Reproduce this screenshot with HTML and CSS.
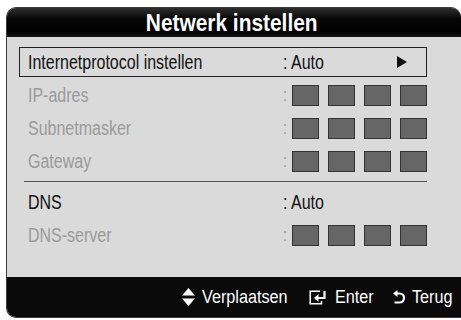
FILE: index.html
```html
<!DOCTYPE html>
<html>
<head>
<meta charset="utf-8">
<link rel="stylesheet" href="styles.css">
</head>
<body>
<div class="panel">
  <div class="header"><span class="title">Netwerk instellen</span></div>
  <div class="body">
    <div class="row selected">
      <span class="label"><span class="nx">Internetprotocol instellen</span></span>
      <span class="value"><span class="nx">: Auto</span></span>
      <svg class="arrow" width="10" height="12" viewBox="0 0 10 12"><path d="M0 0 L10 6 L0 12 Z" fill="#111"/></svg>
    </div>
    <div class="row disabled">
      <span class="label"><span class="nx">IP-adres</span></span>
      <span class="value"><span class="colon">:</span><span class="boxes"><i></i><i></i><i></i><i></i></span></span>
    </div>
    <div class="row disabled">
      <span class="label"><span class="nx">Subnetmasker</span></span>
      <span class="value"><span class="colon">:</span><span class="boxes"><i></i><i></i><i></i><i></i></span></span>
    </div>
    <div class="row disabled">
      <span class="label"><span class="nx">Gateway</span></span>
      <span class="value"><span class="colon">:</span><span class="boxes"><i></i><i></i><i></i><i></i></span></span>
    </div>
    <div class="sep"></div>
    <div class="row">
      <span class="label"><span class="nx">DNS</span></span>
      <span class="value"><span class="nx">: Auto</span></span>
    </div>
    <div class="row disabled">
      <span class="label"><span class="nx">DNS-server</span></span>
      <span class="value"><span class="colon">:</span><span class="boxes"><i></i><i></i><i></i><i></i></span></span>
    </div>
  </div>
  <div class="footer">
    <svg class="ico ico-move" width="13" height="18" viewBox="0 0 13 18"><path d="M6.5 0 L13 7.6 L0 7.6 Z M0 10.4 L13 10.4 L6.5 18 Z" fill="#fff"/></svg>
    <span class="ft ft-move"><span class="nf">Verplaatsen</span></span>
    <svg class="ico ico-enter" width="18" height="15" viewBox="0 0 18 15"><path d="M11 1.2 H1.2 V13.8 H12.5 V11" fill="none" stroke="#fff" stroke-width="1.5"/><path d="M15.5 1 V8 H9" fill="none" stroke="#fff" stroke-width="2.2"/><path d="M5 8 L9.5 4 L9.5 12 Z" fill="#fff"/></svg>
    <span class="ft ft-enter"><span class="nf">Enter</span></span>
    <svg class="ico ico-back" width="12" height="15" viewBox="0 0 12 15"><path d="M4 3.5 H6.5 A4.5 4.5 0 0 1 6.5 12.5 H1.5" fill="none" stroke="#fff" stroke-width="2.2"/><path d="M0 3.5 L4.5 0 L4.5 7 Z" fill="#fff"/></svg>
    <span class="ft ft-back"><span class="nf">Terug</span></span>
  </div>
</div>
</body>
</html>
```

FILE: styles.css
```css
html, body {
  margin: 0;
  padding: 0;
  background: #fff;
}
body {
  padding: 7px 0 2px 6px;
  font-family: "Liberation Sans", Arial, sans-serif;
}
.panel {
  width: 455px;
  height: 311px;
  box-sizing: border-box;
  border: 1px solid #3a3a3a;
  border-right: none;
  border-radius: 10px 10px 0 10px;
  overflow: hidden;
  background: #dadada;
  display: flex;
  flex-direction: column;
}
.header {
  height: 29px;
  background: linear-gradient(#2e2e2e 0%, #050505 40%, #000 80%, #151515 100%);
  color: #fff;
  display: flex;
  justify-content: center;
  align-items: center;
  padding-right: 5px;
}
.title {
  display: inline-block;
  font-weight: bold;
  font-size: 24px;
  line-height: 29px;
  white-space: nowrap;
  transform: scaleX(0.87);
}
.nx {
  display: inline-block;
  white-space: nowrap;
  transform: scaleX(0.8);
  transform-origin: 0 50%;
}
.body {
  flex: 1;
  padding: 10px 34px 0 12px;
}
.row {
  height: 33px;
  display: flex;
  align-items: center;
  font-size: 20px;
  color: #111;
  padding-left: 9px;
  box-sizing: border-box;
}
.row.selected {
  height: 30px;
  border: 1px solid #222;
  margin-bottom: 2px;
  padding-left: 8px;
}
.row.disabled {
  color: #9a9a9a;
}
.label {
  width: 255px;
  flex: none;
}
.value {
  display: flex;
  align-items: center;
  flex: 1;
}
.colon {
  width: 8px;
  font-size: 18px;
  transform: scaleX(0.8);
  transform-origin: 0 50%;
}
.arrow {
  margin-right: 19px;
}
.boxes {
  display: flex;
  gap: 9px;
  margin-left: auto;
}
.boxes i {
  width: 25px;
  height: 19px;
  background: #666;
  border: 1px solid #333;
}
.sep {
  height: 1px;
  background: #555;
  margin: 3px 0 4px 5px;
}
.footer {
  height: 40px;
  background: #0a0a0a;
  color: #fff;
  display: flex;
  justify-content: flex-end;
  align-items: center;
  padding-right: 8px;
  font-size: 18px;
}
.ico {
  flex: none;
}
.ft {
  display: block;
  white-space: nowrap;
}
.nf {
  display: inline-block;
  transform: scaleX(0.9);
  transform-origin: 0 50%;
}
.ico-move { margin-right: 7px; }
.ft-move { width: 86px; margin-right: 21px; }
.ico-enter { margin-right: 8px; }
.ft-enter { width: 39px; margin-right: 19px; }
.ico-back { margin-right: 7px; }
.ft-back { width: 41px; }
```
